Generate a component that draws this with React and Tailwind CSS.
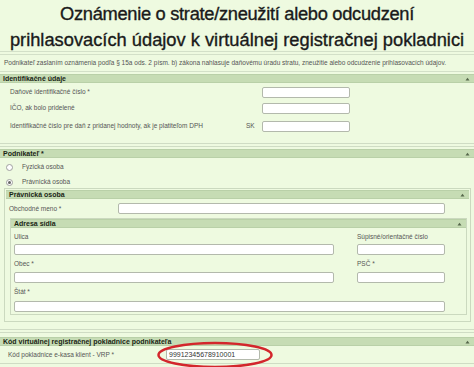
import React from 'react';

const Caret = () => (
  <svg width="5" height="4" viewBox="0 0 5 4" className="mr-[4px]">
    <path d="M0.5 3.5 L2.5 0.8 L4.5 3.5 Z" fill="#55664a" />
  </svg>
);

const SectionHeader = ({ title, className = '' }) => (
  <div
    className={`flex items-center justify-between h-[9px] bg-[#c6dcb4] border-y border-[#b9d0a8] ${className}`}
  >
    <span className="pl-[3px] text-[7px] leading-[7px] font-bold text-[#1a2614]">{title}</span>
    <Caret />
  </div>
);

const Input = ({ className = '', value = '' }) => (
  <div
    className={`h-[11px] bg-white border border-[#b3b9ac] rounded-[2px] text-[7px] leading-[9px] pl-[2px] text-[#333] ${className}`}
  >
    {value}
  </div>
);

const Label = ({ children, className = '' }) => (
  <span className={`text-[6.5px] text-[#555] whitespace-nowrap ${className}`}>{children}</span>
);

const Radio = ({ checked, label, className = '' }) => (
  <div className={`flex items-center pl-[6px] ${className}`}>
    <span className="w-[7px] h-[7px] rounded-full border border-[#a0a0a0] bg-white flex items-center justify-center">
      {checked && <span className="w-[3px] h-[3px] rounded-full bg-[#666]" />}
    </span>
    <Label className="ml-[9px]">{label}</Label>
  </div>
);

export default function App() {
  return (
    <div className="w-[474px] h-[367px] overflow-hidden bg-[#eefae0] font-['Liberation_Sans',Arial,sans-serif]">
      {/* Title */}
      <h1 className="h-[51px] text-center text-[18.3px] leading-[26px] text-[#1a1a1a] pt-[1px] [-webkit-text-stroke:0.35px_#1a1a1a]">
        <span className="tracking-[-0.3px]">Oznámenie o strate/zneužití alebo odcudzení</span>
        <br />
        prihlasovacích údajov k virtuálnej registračnej pokladnici
      </h1>
      <div className="border-t border-[#d3e0c8]" />
      <div className="border-t border-[#d3e0c8] mt-[2px]" />
      <div className="h-[17px] flex items-center pl-[4px] border-b border-[#d3e0c8]">
        <span className="text-[6.5px] text-[#555] whitespace-nowrap">
          Podnikateľ zaslaním oznámenia podľa § 15a ods. 2 písm. b) zákona nahlasuje daňovému úradu stratu,
          zneužitie alebo odcudzenie prihlasovacích údajov.
        </span>
      </div>

      {/* Identifikačné údaje */}
      <SectionHeader title="Identifikačné údaje" className="mt-[2px]" />
      <div className="flex flex-col mt-[2px]">
        <div className="h-[14px] flex items-center">
          <Label className="pl-[10px] w-[262px]">Daňové identifikačné číslo *</Label>
          <Input className="w-[88px]" />
        </div>
        <div className="h-[18px] flex items-center">
          <Label className="pl-[10px] w-[262px]">IČO, ak bolo pridelené</Label>
          <Input className="w-[88px]" />
        </div>
        <div className="h-[18px] flex items-center">
          <Label className="pl-[10px] w-[246px]">
            Identifikačné číslo pre daň z pridanej hodnoty, ak je platiteľom DPH
          </Label>
          <Label className="w-[16px]">SK</Label>
          <Input className="w-[88px]" />
        </div>
      </div>
      <div className="border-t border-[#cfdcc4] mt-[8px]" />
      <div className="border-t border-[#cfdcc4] mt-[2px]" />

      {/* Podnikateľ */}
      <SectionHeader title="Podnikateľ *" className="mt-[2px]" />
      <Radio label="Fyzická osoba" className="h-[18px]" />
      <Radio checked label="Právnická osoba" className="h-[12px]" />

      <div className="ml-[4px] mr-[3px] border border-[#cbd9bf] p-[1px] pb-[6px]">
        <SectionHeader title="Právnická osoba" />
        <div className="h-[19px] flex items-center">
          <Label className="pl-[3px] w-[112px]">Obchodné meno *</Label>
          <Input className="w-[327px]" />
        </div>

        <div className="ml-[4px] mr-[2px] border border-[#cbd9bf] pb-[1px]">
          <SectionHeader title="Adresa sídla" />
          <div className="grid grid-cols-[320px_88px] gap-x-[23px] pl-[3px]">
            <div className="h-[16px] flex items-center pt-[2px]">
              <Label>Ulica</Label>
            </div>
            <div className="h-[16px] flex items-center pt-[2px]">
              <Label>Súpisné/orientačné číslo</Label>
            </div>
            <Input />
            <Input />
            <div className="h-[17px] flex items-center">
              <Label>Obec *</Label>
            </div>
            <div className="h-[17px] flex items-center">
              <Label>PSČ *</Label>
            </div>
            <Input />
            <Input />
            <div className="col-span-2 h-[18px] flex items-center">
              <Label>Štát *</Label>
            </div>
            <Input className="col-span-2" />
          </div>
          <div className="h-[1px]" />
        </div>
      </div>
      <div className="border-t border-[#cfdcc4] mt-[7px]" />
      <div className="border-t border-[#cfdcc4] mt-[2px]" />

      {/* Kód virtuálnej registračnej pokladnice */}
      <SectionHeader title="Kód virtuálnej registračnej pokladnice podnikateľa" className="mt-[4px]" />
      <div className="relative h-[18px] flex items-center border-b border-[#cfdcc4]">
        <Label className="pl-[8px] w-[166px]">Kód pokladnice e-kasa klient - VRP *</Label>
        <Input className="w-[94px]" value="99912345678910001" />
        <svg
          className="absolute left-[156px] top-[-5px]"
          width="118"
          height="28"
          viewBox="0 0 118 28"
        >
          <ellipse cx="59" cy="14" rx="56.5" ry="12" fill="none" stroke="#d3262c" strokeWidth="2.5" />
        </svg>
      </div>
    </div>
  );
}
